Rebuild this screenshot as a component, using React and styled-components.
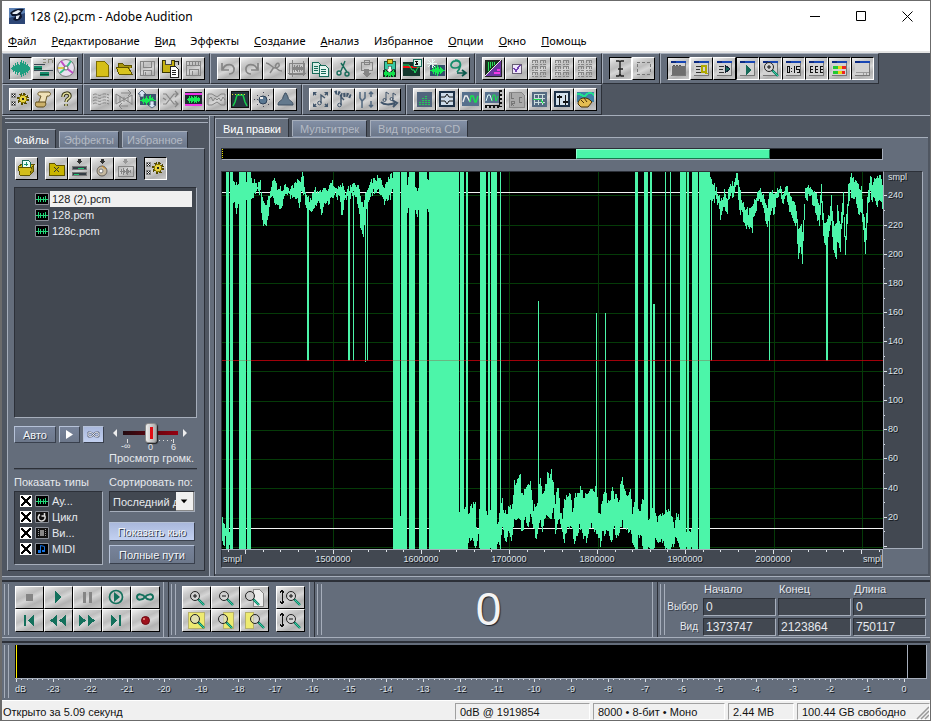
import { useState } from 'react';
import styled, { createGlobalStyle, css } from 'styled-components';

const c = {
  dark: '#4f5661',
  panel: '#646d7b',
  well: '#424851',
  light: '#a6aebb',
  shadow: '#2c3038',
  wave: '#4cf5a9',
  text: '#e6e9ee',
  dim: '#b4bac4',
};

const GlobalStyle = createGlobalStyle`
  * { box-sizing: border-box; }
  body {
    margin: 0;
    background: ${c.dark};
    font-family: "Liberation Sans", Arial, sans-serif;
    font-size: 11px;
  }
  button, input, select { font: inherit; margin: 0; padding: 0; }
  svg { display: block; }
`;

const raised = css`
  border: 1px solid;
  border-color: #fff #000 #000 #fff;
`;

const pressed = css`
  border: 1px solid;
  border-color: #000 #fff #fff #000;
`;

const sunken = css`
  border: 1px solid;
  border-color: ${c.shadow} ${c.light} ${c.light} ${c.shadow};
`;

const Window = styled.div`
  display: flex;
  flex-direction: column;
  min-height: 100vh;
  border: 1px solid #6b6b6b;
  border-left-width: 2px;
  background: ${c.dark};
`;

const TitleBar = styled.header`
  display: flex;
  align-items: center;
  height: 30px;
  padding-left: 7px;
  background: #fff;
  color: #000;
  font-family: "Noto Sans", sans-serif;

  h1 {
    flex: 1;
    margin: 0 0 0 5px;
    font-size: 12px;
    font-weight: 400;
  }
`;

const CaptionButton = styled.button`
  display: grid;
  place-items: center;
  width: 46px;
  height: 29px;
  border: 0;
  background: none;
`;

const MenuBar = styled.nav`
  display: flex;
  gap: 15px;
  height: 22px;
  padding-left: 6px;
  background: #fff;
  border-bottom: 2px solid #e4e4e4;
`;

const MenuItem = styled.button`
  border: 0;
  background: none;
  color: #000;
  font-family: "Noto Sans", sans-serif;
  font-size: 11px;
  line-height: 18px;

  &::first-letter { text-decoration: ${({ $plain }) => ($plain ? 'none' : 'underline')}; }
`;

const ToolbarRow = styled.div`
  display: flex;
  height: 31px;
`;

const ToolGroup = styled.div`
  display: flex;
  align-items: center;
  padding: 0 4px 0 6px;
  background: ${c.panel};
  border: 1px solid;
  border-color: ${c.light} ${c.shadow} ${c.shadow} ${c.light};
`;

const ToolButton = styled.button`
  display: grid;
  place-items: center;
  width: ${({ $wide }) => ($wide ? 29 : 23)}px;
  height: 23px;
  color: ${({ $off }) => ($off ? '#858585' : '#222')};
  background: linear-gradient(155deg, #f0f0f0 0%, #cfcfcf 22%, #bdbdbd 40%, #d6d6d6 55%, #b2b2b2 75%, #cacaca 100%);
  ${({ $down }) => ($down ? pressed : raised)}
`;

const Main = styled.main`
  display: flex;
  flex: 1;
  border-top: 1px solid ${c.light};
`;

const Side = styled.aside`
  display: flex;
  flex-direction: column;
  width: 207px;
  padding: 2px 4px 5px 5px;
`;

const HGrip = styled.div`
  height: 5px;
  margin: 0 -3px 6px -2px;
  border: 1px solid ${c.light};
  border-width: 1px 0;
`;

const TabRow = styled.div`
  display: flex;
  align-items: flex-end;
  gap: 3px;
`;

const Tab = styled.button`
  height: ${({ $active }) => ($active ? 20 : 17)}px;
  margin-bottom: ${({ $active }) => ($active ? -1 : 0)}px;
  padding: 0 ${({ $pad }) => $pad}px;
  color: ${({ $active }) => ($active ? '#fff' : c.dim)};
  background: ${({ $active }) => ($active ? c.panel : 'linear-gradient(#8390a6, #6c7789)')};
  border: 1px solid;
  border-color: ${c.light} ${c.shadow} transparent ${c.light};
  ${({ $active }) => $active && 'border-bottom: 0;'}
`;

const SideBody = styled.div`
  display: flex;
  flex: 1;
  flex-direction: column;
  padding: 8px 7px 5px 6px;
  background: ${c.panel};
  border: 1px solid;
  border-color: ${c.light} ${c.shadow} ${c.shadow} ${c.light};
`;

const SideTools = styled.div`
  display: flex;
  margin: 0 0 7px 1px;

  button:nth-child(1), button:nth-child(5) { margin-right: 7px; }
`;

const FileList = styled.ul`
  flex: 1;
  margin: 0;
  padding: 3px 4px 3px 20px;
  list-style: none;
  background: ${c.well};
  ${sunken}
`;

const FileRow = styled.li`
  display: flex;
  align-items: center;
  gap: 1px;
  height: 16px;
  color: ${c.text};

  span {
    flex: 1;
    padding-left: 2px;
    line-height: 16px;
    color: ${({ $selected }) => ($selected ? '#222' : c.text)};
    background: ${({ $selected }) => ($selected ? '#f0f0f0' : 'none')};
  }
`;

const PreviewRow = styled.div`
  display: flex;
  gap: 3px;
  height: 50px;
  padding-top: 8px;
`;

const FlatButton = styled.button`
  display: grid;
  place-items: center;
  width: ${({ $w }) => ($w ? `${$w}px` : '100%')};
  height: ${({ $w }) => ($w ? 17 : 19)}px;
  color: #f2f4f8;
  text-shadow: 1px 1px #333b49;
  background: ${({ $on }) => ($on ? 'linear-gradient(#a9b8dc, #c3d1f1)' : 'linear-gradient(#77839a, #6d788b)')};
  border: 1px solid;
  border-color: #b6c2d8 #39404d #39404d #b6c2d8;
`;

const Volume = styled.label`
  display: flex;
  flex-direction: column;
  width: 84px;
  margin-left: 2px;
  color: ${c.text};
  text-align: center;
  white-space: nowrap;

  input {
    height: 18px;
    margin: -2px 15px 0 14px;
    appearance: none;
    background: linear-gradient(90deg, #220b10, #960010) center / 100% 4px no-repeat;
  }
  input::-webkit-slider-thumb {
    appearance: none;
    width: 12px;
    height: 20px;
    border: 1px solid #8b8b8b;
    border-radius: 3px;
    background: linear-gradient(#e00c14, #e00c14) center / 3px 12px no-repeat, linear-gradient(90deg, #eee, #aaa);
    box-shadow: 1px 1px 1px #222;
  }
  svg { margin: -13px 0 0 4px; pointer-events: none; }
`;

const Rule = styled.hr`
  width: 100%;
  height: 2px;
  margin: 0 0 5px;
  border: 0;
  border-top: 1px solid ${c.shadow};
  background: #525a67;
`;

const Options = styled.div`
  display: grid;
  grid-template-columns: 89px 86px;
  column-gap: 6px;
  color: ${c.text};
`;

const OptionTitle = styled.div`
  height: 16px;
  line-height: 14px;
  white-space: nowrap;
`;

const TypeList = styled.div`
  height: 74px;
  padding: 1px 5px;
  background: ${c.well};
  ${sunken}
`;

const TypeRow = styled.label`
  display: flex;
  align-items: center;
  gap: 3px;
  height: 16px;
  color: ${c.text};

  input {
    width: 12px;
    height: 12px;
    appearance: none;
    border: 1px solid #fff;
    background:
      linear-gradient(45deg, transparent 43%, #000 43% 57%, transparent 57%),
      linear-gradient(-45deg, #fff 43%, #000 43% 57%, #fff 57%);
  }
  input:not(:checked) { background: #fff; }
`;

const SortColumn = styled.div`
  display: flex;
  flex-direction: column;
  gap: 4px;
`;

const SelectBox = styled.div`
  display: flex;
  height: 21px;
  margin-bottom: 6px;
  background: ${c.well};
  ${sunken}

  select {
    flex: 1;
    min-width: 0;
    padding-left: 3px;
    appearance: none;
    overflow: hidden;
    color: ${c.text};
    background: none;
    border: 0;
  }
  svg { flex: none; background: #f0f0f0; border: 1px solid #888; border-width: 0 1px 1px 0; }
`;

const Splitter = styled.div`
  flex: none;
  width: 6px;
  background: ${c.panel};
  border-left: 1px solid ${c.light};
  border-right: 1px solid ${c.shadow};
`;

const Editor = styled.section`
  display: flex;
  flex: 1;
  flex-direction: column;
  min-width: 0;
  padding: 2px 2px 2px 0;
`;

const EditorBody = styled.div`
  display: flex;
  flex: 1;
  flex-direction: column;
  gap: 11px;
  padding: 10px 5px 6px 5px;
  background: ${c.panel};
  border-top: 1px solid ${c.light};
  border-left: 1px solid ${c.light};
`;

const Overview = styled.div`
  display: flex;
  height: 12px;
  margin-right: 40px;
  background: #000;
  ${sunken}

  &::before {
    content: '';
    width: 1px;
    background: repeating-linear-gradient(#e8e000 0 1px, #000 1px 2px);
  }
`;

const OverviewRange = styled.div`
  border: 1px solid;
  border-color: #8fffd0 #17784d #17784d #8fffd0;
  background: ${c.wave};
`;

const Plot = styled.div`
  display: grid;
  flex: 1;
  grid-template-columns: 1fr 40px;
  grid-template-rows: 1fr 19px;
`;

const WaveBox = styled.div`
  position: relative;
  min-height: 200px;
  background: #000;
  border-left: 1px solid ${c.shadow};
  border-top: 1px solid ${c.shadow};

  > svg { position: absolute; inset: 0; width: 100%; height: 100%; }
`;

const Scale = styled.svg`
  width: 100%;
  height: ${({ $h }) => $h || '100%'};
  font-size: 9px;
  fill: #dfe3e9;
  shape-rendering: crispEdges;

  text { text-shadow: 1px 1px #14171c; }
`;

const RightRuler = styled.div`
  position: relative;
  background: ${c.well};
  border: 1px solid ${c.light};
  border-top-color: ${c.shadow};

  svg { position: absolute; inset: 0; }
`;

const BottomRuler = styled.div`
  height: 19px;
  background: ${c.well};
  border: 1px solid ${c.light};
  border-left-color: ${c.shadow};
`;

const Divider = styled.div`
  height: 6px;
  background: ${c.panel};
  border-top: 1px solid ${c.light};
  border-bottom: 2px solid ${c.shadow};
`;

const Dock = styled.section`
  display: flex;
  height: 55px;
  background: ${c.panel};
`;

const VGrip = styled.div`
  flex: none;
  width: 5px;
  margin: 2px 6px 2px 2px;
  border: 1px solid ${c.light};
  border-width: 0 1px;
`;

const ButtonGrid = styled.div`
  display: grid;
  grid-template-columns: repeat(${({ $cols }) => $cols}, 29px);
  align-content: start;
  padding-top: 4px;
  margin-right: ${({ $gap }) => $gap}px;
`;

const TimeDisplay = styled.output`
  flex: 1;
  padding-right: 3px;
  color: #f4f4f4;
  font-size: 46px;
  line-height: 54px;
  text-align: center;
  text-shadow: 1px 1px 1px #22262d;
`;

const RangeTable = styled.table`
  border-spacing: 2px 1px;
  margin: -2px 2px 0 -8px;
  color: ${c.text};
  text-shadow: 1px 1px #3a414c;
  table-layout: fixed;
  width: 265px;

  th {
    height: 15px;
    padding: 0 0 0 1px;
    font-weight: 400;
    text-align: left;
  }
  th:first-child { width: 36px; }
  tbody th {
    padding: 0 3px 0 0;
    font-size: 10px;
    text-align: right;
    white-space: nowrap;
  }
  td { padding: 0; }
  input {
    display: block;
    width: 100%;
    height: 18px;
    padding: 0 2px;
    color: ${c.text};
    font-size: 12px;
    background: ${c.well};
    ${sunken}
    outline: 0;
  }
`;

const LevelDock = styled.section`
  display: flex;
  height: 57px;
  padding-right: 3px;
  background: ${c.panel};
`;

const LevelColumn = styled.div`
  flex: 1;
  padding-top: 2px;
`;

const LevelMeter = styled.div`
  display: flex;
  justify-content: space-between;
  height: 34px;
  padding: 0 18px 0 1px;
  background: #000;
  border-bottom: 1px solid ${c.light};
  border-right: 1px solid ${c.light};

  i { width: 1px; background: ${c.light}; }
  i:first-child { background: #ffee00; }
`;

const StatusBar = styled.footer`
  display: flex;
  gap: 3px;
  height: 20px;
  padding-top: 2px;
  background: #f0f0f0;
  border-top: 1px solid #fff;
`;

const StatusCell = styled.div`
  width: ${({ $w }) => $w}px;
  padding-left: 4px;
  color: #111;
  line-height: 16px;
  border: 1px solid;
  border-color: #a0a0a0 #fff #fff #a0a0a0;
  ${({ $w }) => !$w && 'flex: 1; padding-left: 1px; border-color: transparent; border-left: 0;'}
  &:last-child { display: flex; justify-content: space-between; }
`;

const Glyph = ({ children, size = 21, height, crisp }) => (
  <svg
    width={size}
    height={height || size}
    viewBox={`0 0 ${size} ${height || size}`}
    fill="none"
    stroke="currentColor"
    shapeRendering={crisp ? 'crispEdges' : 'auto'}
    aria-hidden="true"
  >
    {children}
  </svg>
);

const lens = (x, y, sign = '+') => (
  <g shapeRendering="auto">
    <path d={`M${x + 3} ${y + 3}l6 6`} stroke="#0a7d62" strokeWidth="2.400" />
    <path d={`M${x + 4} ${y + 4}l5 5`} stroke="#37cfa4" />
    <circle cx={x} cy={y} r="4.500" stroke="#222" fill="#d8d8d8" fillOpacity=".6" />
    {sign && <path d={`M${x - 2} ${y}h4`} stroke="#111" />}
    {sign === '+' && <path d={`M${x} ${y - 2}v4`} stroke="#111" />}
  </g>
);

// vertical bars around a middle line
const bars = (x, mid, heights, stroke, step = 1) => (
  <path d={heights.map((h, i) => `M${x + i * step + 0.5} ${mid - h}v${h * 2 + 1}`).join('')} stroke={stroke} />
);

const winIcon = (inner) => (
  <>
    <path d="M3 3h15v15H3z" fill="#d2d2d2" stroke="none" />
    <path d="M17.500 5v13M3 17.500h15" stroke="#777" />
    <path d="M3 4h15" stroke="#1746b4" strokeWidth="2" />
    <path d="M3 4h5" stroke="#0c2a80" strokeWidth="2" />
    {inner}
  </>
);

const cell = (x, y) => `M${x} ${y + 0.5}h6M${x + 0.5} ${y}v3M${x + 3.5} ${y}v3M${x} ${y + 4.5}h2m1 0h3M${x + 5.5} ${y + 1}v2`;

const icons = {
  edit: bars(1, 10, [0, 1, 3, 2, 5, 3, 6, 4, 3, 6, 8, 5, 7, 4, 6, 3, 4, 2, 1], '#1f9e80'),
  multi: <><path d="M1 6.500h11M1 12.500h19" stroke="#3d4653" /><path d="M1 8h8v4H1zM7 14h9v4H7z" fill="#168c6b" stroke="none" /><path d="M1 10.500h8m-2 6h9" stroke="#0b4e3d" /><path d="M10 1.500h3m-3 3h3m2-3h4m-4 0v3m4-3v3" stroke="#8b8b7a" /></>,
  cd: <g shapeRendering="auto"><circle cx="10" cy="10" r="8.500" fill="#e8e0ee" stroke="#777" /><path d="M10 10L5 3M10 10l7 5" stroke="#c04fc4" strokeWidth="2" /><path d="M10 10l5-7M10 10l-6 5" stroke="#37bf87" strokeWidth="2" /><path d="M10 10H2" stroke="#d8ca49" strokeWidth="2" /><circle cx="10" cy="10" r="2" fill="#fff" stroke="#666" /></g>,
  page: <path d="M5 3h8l4 4v11H5z" fill="#d6bf17" stroke="#7b6b00" />,
  folder: <><path d="M4 15V5h4l2 2h7v3" fill="#a8960f" stroke="#5e5300" /><path d="M2 9h12l4 7H5z" fill="#d8c41e" stroke="#5e5300" /></>,
  disk: <path d="M3 3h14v14H3zM6 3v6h8V3M6 17v-5h8v5M8 14v3" />,
  saveAs: <><path d="M2 2h12v12H2z" fill="#c5b113" stroke="#3b3700" /><path d="M5 2v4h6V2" fill="#ddd" stroke="#444" /><path d="M10 8h5l3 3v8h-8z" fill="#fff" stroke="#222" /><path d="M12 12h4m-4 2h4m-4 2h4M14 3h4v4" stroke="#222" /></>,
  saveAll: <><path d="M3 3h14v14H3zM3 7h14M6 4v3m3-3v3m3-3v3m3-3v3M6 17v-6h9v6M9 13v4" /></>,
  undo: <path d="M4 5v7h7M5 11c2-6 12-6 11 1 0 3-3 4-5 4" strokeWidth="1.700" shapeRendering="auto" />,
  redo: <path d="M17 5v7h-7M16 11C14 5 4 5 5 12c0 3 3 4 5 4" strokeWidth="1.700" shapeRendering="auto" />,
  repeat: <path d="M2 5c4 0 6 5 9 5s5-2 4-4-5 1-3 4c2 2 4 3 6 3M10 9l-4 6" strokeWidth="1.500" shapeRendering="auto" />,
  trim: <><path d="M2 5h15v11H2zM5 2v17M1 15h18M16 3v15" />{bars(6, 10, [1, 3, 1, 2, 3, 1, 3, 1, 2, 1], '#858585')}</>,
  copy: <><path d="M2 4h6l3 3v8H2z" fill="#d7ece5" stroke="#176b59" /><path d="M9 7h6l3 3v8H9z" fill="#e5f5f0" stroke="#176b59" /><path d="M4 8h4m-4 2h4m-4 2h4m3-1h5m-5 2h5m-5 2h5" stroke="#176b59" /></>,
  cut: <path d="M12 3L8 13M8 5l6 9M4 15a2 2 0 104 0 2 2 0 10-4 0M12 16a2 2 0 104 0 2 2 0 10-4 0" stroke="#176b59" strokeWidth="1.400" shapeRendering="auto" />,
  paste: <><path d="M5 4h11v8H5zM8 2h5v4H8z" /><path d="M8 11h5v4h3l-5 4-5-4h2z" fill="#858585" stroke="none" /></>,
  mixPaste: <><path d="M5 3h11v8H5z" fill="#38c9a2" stroke="#155645" /><path d="M8 1h5v4H8z" fill="#e4c629" stroke="#6b5700" /><path d="M4 12h13v7H4z" fill="#142a20" stroke="none" />{bars(5, 15, [1, 3, 2, 1, 3, 2, 3, 1, 2, 3, 1], '#12e04b')}<path d="M9 8h3v3h2l-3.500 4L7 11h2z" fill="#fff" stroke="#333" strokeWidth=".5" /></>,
  zero: <><path d="M1 4h17v14H1z" fill="#15382e" stroke="none" /><path d="M1 9h16" stroke="#f01010" strokeWidth="2" /><path d="M1 7h6l3 5h2l1 3 3-6h2" stroke="#20e060" shapeRendering="auto" /><path d="M11 1h8v7h-8z" fill="#ddf2e8" stroke="#176b59" /><path d="M13 3h3l-2 2 2 1h-3" stroke="#111" /></>,
  insert: <><path d="M5 7h15v11H5z" fill="#33506c" stroke="none" />{bars(5, 12, [0, 0, 1, 3, 1, 4, 2, 5, 3, 1, 3, 2, 1, 0, 0], '#15ec53')}<path d="M7 1v9M2 5h10M3 2l7 7m0-7L3 9" stroke="#e9f8f5" /></>,
  convert: <g shapeRendering="auto"><path d="M7 2c7 0 7 8 0 8s-4-8 2-7c6 1 3 8 0 11" stroke="#168c6b" strokeWidth="1.700" /><path d="M9 15h9m-4-3l4 3-4 3" stroke="#0a594c" strokeWidth="1.700" /></g>,
  spectral: <><path d="M2 2h16v16H2z" fill="#6c35a0" stroke="#222" /><path d="M3 3h14L3 17z" fill="#14391d" stroke="none" /><path d="M5 4v9M7 4v6m2-6v4m2-4v3" stroke="#2ae05b" /><path d="M2 18L18 2" stroke="#eee" /><path d="M11 15h6m-3-3h3" stroke="#f53be5" strokeWidth="2" /></>,
  check: <><path d="M6 6h9v9H6z" fill="#eee5fa" stroke="#655c72" /><path d="M8 10l2 3 4-6" stroke="#7240b0" strokeWidth="1.700" /></>,
  blocks: <path d={[[3, 2], [11, 2], [3, 8], [11, 8], [3, 14], [11, 14]].map(([x, y]) => cell(x, y)).join('')} />,
  ibeam: <path d="M6 3h3l1 1v12l-1 2H6M14 3h-3l-1 1v12l1 2h3M8 11h5" stroke="#222" strokeWidth="1.400" shapeRendering="auto" />,
  marquee: <path d="M4 4h13v12H4z" stroke="#777" strokeDasharray="3 2" />,
  wOrg: winIcon(<><path d="M4 8h13v9H4z" fill="#6e6e6e" stroke="none" /><path d="M5 7.500h2m1 0h2m1 0h2" stroke="#555" /></>),
  wCue: winIcon(<><path d="M5 8h5m-5 3h4m-4 3h5" stroke="#333" /><path d="M11 8h4v6h-4zM14 13l2 3" stroke="#b0a800" strokeWidth="2" /></>),
  wList: winIcon(<><path d="M5 8h5m-5 3h4m-4 3h5" stroke="#333" /><path d="M11 7l5 4-5 4z" fill="#176b59" stroke="#123" /></>),
  wPlay: winIcon(<path d="M9 7l5 5-5 5z" fill="#176b59" stroke="none" />),
  wZoom: winIcon(lens(9, 9)),
  wTime: winIcon(<path d="M4.500 8.500h2v6h-2zM8.500 10v1m0 2v1M11.500 8v7M16.500 8.500h-3v3h3v3h-3" stroke="#111" />),
  wSel: winIcon(<path d="M7 8.500H4.500v6H7M4.500 11.500H7M12 8.500H9.500v6H12M9.500 11.500H12M17 8.500h-2.500v6H17M14.500 11.500H17" stroke="#111" strokeWidth="1.500" />),
  wLevel: winIcon(<><path d="M4 9h5m-5 5h5" stroke="#21c931" strokeWidth="3" /><path d="M9 9h4m-4 5h4" stroke="#e5d714" strokeWidth="3" /><path d="M13 9h4m-4 5h3" stroke="#ee2520" strokeWidth="3" /></>),
  wStatus: winIcon(<path d="M4 14.500h13M11 15v2m3-2v2" stroke="#999" />),
  gear: <><path d="M1.500 4.500h4v4h-4zM1.500 12.500h4v4h-4z" fill="#eee" stroke="#888" /><path d="M2 5l3 3m0-3L2 8m0 5l3 3m0-3l-3 3" stroke="#222" /><circle cx="13" cy="10" r="4.500" stroke="#534900" strokeWidth="3" strokeDasharray="2 1.500" /><circle cx="13" cy="10" r="3.500" fill="#e8d33f" stroke="#8a7900" /><path d="M12 9h2v2h-2z" fill="#222" stroke="none" /></>,
  script: <g shapeRendering="auto"><path d="M7 3h9c3 1 1 5-2 4l-2 8H5l3-8c-4 0-4-4-1-4z" fill="#f0e2b8" stroke="#6b5827" /><path d="M3 13h9c2 2 0 5-2 5H5c-3 0-3-3-2-5z" fill="#ccb16b" stroke="#594718" /></g>,
  help: <g shapeRendering="auto"><path d="M7 8c0-5 7-5 7-1 0 3-4 2-4 6m0 2v2" stroke="#37371a" strokeWidth="3.500" /><path d="M7 8c0-5 7-5 7-1 0 3-4 2-4 6m0 2v2" stroke="#e8e2a0" strokeWidth="1.500" /></g>,
  lines: <path d="M2 6c4-3 5 2 8 0s5-1 8 0M2 9c4-3 5 2 8 0s5-1 8 0M2 12c4-3 5 2 8 0s5-1 8 0M2 15c4-3 5 2 8 0s5-1 8 0" strokeDasharray="4 1" shapeRendering="auto" />,
  flip: <path d="M7 4h10m-3-3l3 3-3 3M14 17H5m3-3l-3 3 3 3M2 5l16 10M2 15L18 6M2 5v10m4-8v7m4-6v5m4-5v5m4-7v10" shapeRendering="auto" />,
  norm: <><path d="M3 5h16v11H3z" fill="#3d536e" stroke="none" />{bars(3, 11, [0, 0, 1, 3, 1, 2, 4, 2, 1, 4, 5, 2, 3, 1, 0, 0], '#15ec53')}<path d="M5 1l4 4H7v3H3V5H1zM15 19l-4-3h2v-4h4v4h2z" fill="#d7e3f4" stroke="#30445b" strokeWidth=".7" shapeRendering="auto" /></>,
  cross: <path d="M3 5h3l8 10h4M3 15h3l8-10h4M15 2l3 3-3 3M15 12l3 3-3 3M3 9l3 2" strokeWidth="1.200" shapeRendering="auto" />,
  dyn: <><path d="M2 3h17v14H2z" fill="#1d2d31" stroke="none" /><path d="M2 5h17M2 16h17" stroke="#ec35e6" strokeWidth="2" />{bars(4, 10, [0, 1, 3, 1, 3, 2, 1, 3, 2, 3, 1, 2, 1], '#15ec53')}</>,
  envelope: <><path d="M2 5l4 0 5 3 4-3h4M2 16l4 0 5-3 4 3h4M2 5v11M19 5v11" shapeRendering="auto" /><path d="M3 10l2-2 2 4 2-3 2 2 2-2 2 3 2-4 2 3" shapeRendering="auto" /></>,
  filter: <><path d="M2 2h17v16H2z" fill="#26343e" stroke="#111" /><path d="M4 17l2-4 2-7h6l2 7 2 4" stroke="#15d34d" strokeWidth="1.500" shapeRendering="auto" /><path d="M3 5h15" stroke="#dce52a" strokeDasharray="1 2" /></>,
  noise: <><circle cx="11" cy="11" r="4" fill="#597792" stroke="#2c4057" shapeRendering="auto" /><path d="M8 8h3v2H8z" fill="#eee" stroke="none" /><path d="M2 10h1m2 0h1m11 0h1M5 6h1m10 0h1M5 15h1m10 0h1M11 3v1m0 13v1" stroke="#445" /></>,
  stretch: <path d="M10 4h1l2 4c0 4 5 3 5 8H3c0-5 5-4 5-8z" fill="#63798d" stroke="#3f5163" shapeRendering="auto" />,
  pitch: <g shapeRendering="auto"><path d="M3 3h4L3 7zM18 3h-4l4 4zM3 18h4l-4-4zM18 18h-4l4-4z" fill="#41556b" stroke="none" /><path d="M4 4l2 2m11-2l-2 2M4 17l2-2m11 2l-2-2M11 14V6l4 3" stroke="#41556b" strokeWidth="1.300" /><circle cx="9.500" cy="14" r="1.800" stroke="#41556b" /></g>,
  notes: <g shapeRendering="auto"><path d="M2 4c4-2 5 3 9 2s4 1 8 2" stroke="#41556b" strokeWidth="4" strokeDasharray="2 1" /><path d="M8 16V8l3 3" stroke="#41556b" strokeWidth="1.400" /><circle cx="6.500" cy="16" r="1.800" stroke="#41556b" /></g>,
  tuning: <path d="M4 3v6l2 3 3-3V3M6 12v7M15 8V3m-2 2l2-2 2 2M15 12v6m-2-2l2 2 2-2" stroke="#52687f" strokeWidth="1.500" shapeRendering="auto" />,
  rotate: <g shapeRendering="auto"><path d="M2 13c3 3 9 3 14 1m-3-3l5 3-4 4" stroke="#41556b" strokeWidth="2" /><path d="M7 11V3l3 2M14 10V4l3 2" stroke="#41556b" /><circle cx="5.500" cy="11" r="1.500" stroke="#41556b" /><circle cx="12.500" cy="10" r="1.500" stroke="#41556b" /></g>,
  freq: <><path d="M3 3h15v15H3z" fill="#50647d" stroke="none" /><path d="M6 16v-4m3 4V9m3 7V6m3 10v-6" stroke="#22cc56" strokeDasharray="1 1" strokeWidth="2" /></>,
  phase: <><path d="M3 3h14v14H3z" fill="#cddbe8" stroke="#1d3147" strokeWidth="2" /><path d="M4 8h4l2-3 2 3h4M4 12h4l2 3 2-3h4" stroke="#111" shapeRendering="auto" /></>,
  stats: <><path d="M2 3h17v14H2z" fill="#56708d" stroke="none" /><path d="M3 13l2-6 2 0 3 6" stroke="#eee" strokeWidth="1.400" shapeRendering="auto" /><path d="M10 13l1-6h2l2 6h1l2-6" stroke="#18e34d" strokeWidth="1.500" shapeRendering="auto" /></>,
  statsAxis: <><path d="M2 3h14v11H2z" fill="#56708d" stroke="none" /><path d="M3 12l2-6 2 0 2 6" stroke="#dff" shapeRendering="auto" /><path d="M9 12l1-6h2l1 6 2-5" stroke="#18e34d" shapeRendering="auto" /><path d="M17.500 1v17M2 17.500h16" stroke="#111" strokeWidth="3" strokeDasharray="2 2" /><path d="M16.500 1v16M2 16.500h15" stroke="#111" /></>,
  lrc: <><path d="M3 3h12l3 3v12H3z" fill="#aaa" stroke="#888" /><path d="M5 4v5h3M5 17v-5h3v2H5l3 3M16 8h-3v5h3" stroke="#777" /></>,
  grid: <><path d="M3 3h15v15H3z" fill="#536a81" stroke="none" /><path d="M5.500 5v11m4-11v11m4-11v11M5 5.500h11M5 9.500h11M5 13.500h11" stroke="#cdd" /><path d="M4 10h7l4 5" stroke="#1dd64e" /></>,
  mixer: <><path d="M3 3h14v14H3z" fill="#d3e1ec" stroke="#1d3147" strokeWidth="2" /><path d="M7.500 6v10m6-10v10M5 8h5m1 5h5" stroke="#111" strokeWidth="1.600" /></>,
  surf: <><path d="M2 3h17v10H2z" fill="#3f81a6" stroke="none" /><path d="M2 6c4-4 5 4 9 0s5-2 8 0" stroke="#20df8f" strokeWidth="2" /><g shapeRendering="auto"><path d="M3 15c0-6 7-8 12-4l2 2-4 5H6z" fill="#e5bd51" stroke="#4b3104" /><path d="M6 11l3 3M9 9l3 4" stroke="#4b3104" /></g></>,
  open: <><path d="M2 9l4-3h11v3M2 9h14l-2 8H4z" fill="#d2bd1b" stroke="#5e5300" /><path d="M16 9l2-2-1 7-3 3" fill="#a18f10" stroke="#5e5300" /><path d="M6 9V2h6l2 2v5" fill="#e8fff8" stroke="#176b59" /><path d="M10 4v4M8 6h4" stroke="#168c6b" /></>,
  closeFolder: <><path d="M3 5h5l2 2h8v10H3z" fill="#c8b400" stroke="#5e5300" /><path d="M8 9l5 5m0-5l-5 5" stroke="#333" /></>,
  toTracks: <><path d="M9 1h3v2h2l-3.500 3L7 3h2z" fill="#333" stroke="none" /><path d="M3 8h14v3H3zm0 6h14v3H3z" fill="#333c44" stroke="#777" /><path d="M9 10h6M5 16h5" stroke="#20c774" /></>,
  toCd: <><path d="M9 1h3v2h2l-3.500 3L7 3h2z" fill="#333" stroke="none" /><g shapeRendering="auto"><circle cx="10" cy="13" r="5" fill="#c6b9a0" stroke="#66615b" /><circle cx="9" cy="13" r="2" fill="#fff" stroke="#777" /><path d="M10 8l4 3" stroke="#c98820" /></g></>,
  toWave: <><path d="M9 1h3v2h2l-3.500 3L7 3h2z" fill="#999" stroke="none" /><path d="M3 8h15v10H3z" />{bars(5, 13, [0, 2, 0, 3, 1, 0, 2, 3, 1, 0, 1], '#858585')}</>,
  stop: <path d="M7 7h7v7H7z" fill="#858585" stroke="none" />,
  play: <path d="M7 4l7 6-7 6z" fill="#13705c" stroke="none" />,
  pause: <path d="M6 5h3v11H6zm6 0h3v11h-3z" fill="#858585" stroke="none" />,
  playEnd: <g shapeRendering="auto"><circle cx="10" cy="10" r="6.500" stroke="#13705c" strokeWidth="1.700" /><path d="M8 5l6 5-6 5z" fill="#13705c" stroke="none" /></g>,
  loop: <path d="M10 10C8 7 2 6 2 10s6 3 8 0 8-4 8 0-6 3-8 0" stroke="#13705c" strokeWidth="2" shapeRendering="auto" />,
  start: <path d="M5 5h2v11H5zM15 5v11l-6-5.500z" fill="#13705c" stroke="none" />,
  rewind: <path d="M9 5v11l-7-5.500zM18 5v11l-7-5.500z" fill="#13705c" stroke="none" />,
  forward: <path d="M2 5v11l7-5.500zM11 5v11l7-5.500z" fill="#13705c" stroke="none" />,
  end: <path d="M5 5v11l6-5.500zM13 5h2v11h-2z" fill="#13705c" stroke="none" />,
  record: <g shapeRendering="auto"><circle cx="10.500" cy="10.500" r="4" fill="#9f111c" stroke="#6f0711" /><circle cx="9" cy="9" r="1" fill="#e98" stroke="none" /></g>,
  zoomIn: lens(9, 9),
  zoomOut: lens(9, 9, '-'),
  zoomFull: <><path d="M9 2h6l4 4v13H9z" fill="#eee" stroke="#888" />{lens(6, 9, '')}</>,
  zoomSel: <><path d="M2 2h16v16H2z" fill="#eeeb70" stroke="#b8b26a" />{lens(9, 9, '')}</>,
  zoomLeft: <><path d="M8 2h10v16H8z" fill="#eeeb70" stroke="#b8b26a" />{lens(8, 9, '')}</>,
  zoomRight: <><path d="M1 2h8v16H1z" fill="#eeeb70" stroke="#b8b26a" />{lens(11, 9, '')}</>,
  vIn: <><path d="M2 3v14M0 6l2-3 2 3M0 14l2 3 2-3" stroke="#111" />{lens(11, 9)}</>,
  vOut: <><path d="M2 3v14M0 6l2-3 2 3M0 14l2 3 2-3" stroke="#111" />{lens(11, 9, '-')}</>,
};

const Tool = ({ name, ...rest }) => (
  <ToolButton type="button" aria-label={name} {...rest}>
    <Glyph crisp>{icons[name]}</Glyph>
  </ToolButton>
);

// "!" marks a disabled tool, "_" one that is pressed in
const parseTool = (key) => ({
  name: key.replace(/[!_]/g, ''),
  $off: key.includes('!'),
  $down: key.includes('_'),
});

const toolbars = [
  [
    ['_edit', 'multi', 'cd'],
    ['page', 'folder', '!disk', 'saveAs', '!saveAll'],
    ['!undo', '!redo', '!repeat', '!trim', 'copy', 'cut', '!paste', 'mixPaste', 'zero', 'insert', 'convert'],
    ['spectral', 'check', '!blocks', '!blocks', '!blocks'],
    ['_ibeam', '!marquee'],
    ['_wOrg', 'wCue', 'wList', '_wPlay', '_wZoom', '_wTime', '_wSel', '_wLevel', '_wStatus'],
  ],
  [
    ['gear', 'script', 'help'],
    ['!lines', '!flip', 'norm', '!cross', 'dyn', '!envelope', 'filter', 'noise', 'stretch'],
    ['pitch', 'notes', 'tuning', 'rotate'],
    ['freq', 'phase', 'stats', 'statsAxis', '!lrc', 'grid', 'mixer', 'surf'],
  ],
];

const menu = ['Файл', 'Редактирование', 'Вид', 'Эффекты', 'Создание', 'Анализ', 'Избранное', 'Опции', 'Окно', 'Помощь'];
const noMnemonic = ['Эффекты', 'Избранное'];

const files = ['128 (2).pcm', '128.pcm', '128c.pcm'];

const miniWave = (
  <Glyph size={14} height={12}>
    <path d="M.5.5h13v11H.5z" fill="#000" stroke="#8a8f98" />
    <path d="M1 6.500h12M3.500 3v6M5.500 4v5M8.500 4v5M10.500 3v6" stroke="#22d878" />
  </Glyph>
);

const types = [
  ['Ау...', miniWave],
  ['Цикл', <Glyph key="l" size={14} height={12}><path d="M.5.5h13v11H.5z" fill="#111" stroke="#8a8f98" /><path d="M5 3.500a3.500 3.500 0 104.500 1M9.500 2v3h-3" stroke="#ddd" strokeWidth="1.500" /></Glyph>],
  ['Ви...', <Glyph key="v" size={14} height={12}><path d="M.5.5h13v11H.5z" fill="#111" stroke="#8a8f98" /><path d="M3.500 2v8m7-8v8" stroke="#999" strokeDasharray="1 1" /><path d="M5 3h4v6H5z" fill="#888" stroke="none" /></Glyph>],
  ['MIDI', <Glyph key="m" size={14} height={12}><path d="M.5.5h13v11H.5z" fill="#000" stroke="#8a8f98" /><path d="M5.500 9V2.500l4 1v5" stroke="#1673e0" /><path d="M3 7h3v3H3zm4 0h3v2H7z" fill="#1673e0" stroke="none" /></Glyph>],
];

// wave drawing, 661 x 377 units
const W = 661;
const H = 377;

const columns = [
  [4, 3], [8, 3], [17, 7], [25, 4], [171, 7], [179, 6], [187, 6], [197, 8], [207, 30], [238, 4], [244, 2],
  [258, 6], [266, 2], [269, 6], [278, 1], [413, 3], [422, 4], [428, 2], [443, 1], [448, 1],
  [458, 6], [465, 2], [470, 6], [477, 11],
];

// x, y1, y2, width
const spikes = [
  [85, 28, 189, 2], [126, 20, 189, 2], [131, 20, 189, 1], [143, 30, 190, 1], [145, 25, 189, 1],
  [489, 20, 189, 1], [547, 20, 189, 1], [604, 50, 189, 2],
  [316, 129, 350, 1], [374, 141, 350, 1], [383, 141, 350, 1], [431, 132, 376, 2],
];

// x, top, bottom triples
const envelopes = [
  [11, 12, 28, 14, 11, 40, 17, 11, 26, 29, 7, 28, 31, 9, 23, 35, 12, 20, 38, 8, 20, 39, 21, 43, 41, 30, 54, 44, 30, 53, 46, 24, 43, 48, 18, 28, 51, 6, 23, 53, 12, 34, 57, 17, 36, 59, 16, 33, 62, 16, 26, 65, 13, 23, 68, 18, 24, 72, 14, 22, 75, 9, 28, 77, 12, 34, 80, 2, 17, 83, 17, 30, 86, 26, 38, 88, 28, 40, 92, 16, 37, 95, 18, 28, 100, 18, 43, 102, 15, 31, 106, 18, 33, 109, 10, 25, 112, 12, 22, 117, 18, 27, 120, 13, 46, 122, 20, 28, 125, 18, 25, 132, 13, 22, 134, 12, 28, 137, 18, 45, 138, 26, 53, 141, 32, 63, 143, 22, 42, 145, 18, 33, 148, 8, 22, 152, 7, 19, 157, 3, 20, 160, 10, 25, 162, 15, 33, 165, 7, 27, 168, 3, 25, 171, 8, 18],
  [185, 12, 38, 187, 2, 38, 193, 12, 38, 195, 18, 43, 198, 10, 36, 205, 5, 40, 208, 5, 40],
  [488, 2, 26, 490, 9, 31, 493, 16, 26, 496, 21, 33, 498, 29, 48, 501, 28, 38, 502, 20, 34, 505, 26, 43, 506, 16, 25, 508, 11, 23, 511, 13, 25, 513, 6, 18, 515, 2, 14, 517, 18, 41, 520, 29, 41, 522, 33, 54, 524, 36, 58, 526, 41, 53, 528, 34, 56, 530, 36, 58, 531, 29, 44, 534, 24, 36, 535, 19, 31, 538, 14, 29, 540, 21, 31, 542, 29, 44, 545, 33, 53, 548, 21, 41, 550, 18, 38, 552, 23, 44, 554, 18, 26, 558, 16, 23, 561, 23, 33, 564, 14, 24, 567, 24, 38, 570, 29, 48, 572, 28, 49, 574, 38, 54, 576, 54, 86, 578, 51, 78, 580, 58, 89, 582, 34, 48, 583, 14, 28, 588, 14, 23, 592, 19, 36, 594, 21, 46, 597, 31, 51, 599, 14, 33, 601, 44, 64, 603, 54, 74, 605, 48, 74, 607, 44, 58, 609, 23, 48, 611, 49, 76, 614, 54, 88, 615, 36, 68, 618, 54, 83, 619, 38, 58, 621, 23, 41, 623, 61, 86, 624, 44, 71, 626, 14, 34, 628, 3, 21, 630, 4, 29, 632, 8, 26, 634, 6, 29, 637, 19, 44, 639, 14, 38, 641, 41, 61, 643, 54, 83, 644, 38, 68, 646, 18, 34, 648, 4, 21, 650, 13, 33, 652, 3, 24, 655, 6, 34, 658, 6, 29, 661, 18, 39],
  [0, 347, 371, 2, 351, 371, 3, 358, 366, 4, 358, 368, 8, 358, 376],
  [178, 345, 377, 180, 345, 377],
  [237, 342, 377, 242, 335, 377, 244, 333, 377, 246, 345, 371, 248, 331, 368, 250, 333, 363, 253, 333, 377, 254, 358, 375, 256, 358, 365, 257, 338, 377, 258, 335, 377, 264, 341, 377, 268, 338, 377, 275, 351, 371, 278, 338, 377, 280, 328, 355, 282, 341, 365, 284, 341, 368, 286, 336, 360, 289, 335, 368, 290, 331, 361, 292, 311, 348, 295, 308, 345, 298, 305, 348, 299, 321, 360, 301, 325, 358, 303, 315, 345, 306, 310, 356, 308, 310, 345, 310, 331, 351, 311, 338, 358, 314, 331, 365, 316, 325, 355, 318, 306, 348, 320, 321, 360, 323, 315, 345, 325, 303, 346, 327, 305, 345, 329, 300, 345, 331, 311, 338, 333, 333, 361, 335, 313, 355, 336, 313, 350, 338, 338, 351, 340, 348, 360, 342, 325, 368, 345, 325, 358, 348, 320, 355, 350, 342, 360, 352, 325, 370, 355, 321, 365, 357, 318, 355, 359, 316, 356, 361, 326, 365, 364, 323, 368, 366, 318, 360, 369, 315, 351, 371, 318, 358, 374, 315, 360, 376, 338, 365, 378, 341, 373, 380, 330, 361, 383, 315, 361, 385, 333, 356, 388, 325, 370, 390, 316, 365, 392, 325, 355, 394, 321, 365, 397, 331, 361, 398, 315, 355, 400, 305, 351, 402, 315, 356, 405, 325, 355, 406, 320, 360, 408, 316, 355, 410, 343, 368, 412, 331, 375, 413, 335, 377, 416, 340, 365, 419, 335, 365, 421, 326, 377, 425, 348, 377, 428, 341, 377, 431, 331, 377, 433, 338, 365, 435, 351, 371, 438, 340, 370, 441, 345, 368, 443, 341, 377, 446, 340, 377, 450, 345, 375, 452, 356, 370, 454, 341, 366, 456, 343, 373, 458, 358, 377],
  [464, 358, 377, 470, 358, 377],
];

const buildWave = () => {
  let seed = 7;
  const rnd = () => {
    seed = (seed * 16807) % 2147483647;
    return seed / 2147483647 - 0.5;
  };
  let d = columns.map(([x, w]) => `M${x} 0h${w}V${H}h-${w}z`).join('');
  d += spikes.map(([x, a, b, w]) => `M${x} ${a}h${w}V${b}h-${w}z`).join('');
  envelopes.forEach((e) => {
    for (let i = 0; i + 5 < e.length; i += 3) {
      const [x0, t0, b0, x1, t1, b1] = e.slice(i, i + 6);
      for (let x = x0; x < x1; x++) {
        const k = (x - x0) / (x1 - x0);
        const t = Math.max(0, Math.round(t0 + (t1 - t0) * k + rnd() * 7));
        const b = Math.min(H, Math.round(b0 + (b1 - b0) * k + rnd() * 7));
        d += `M${x} ${t}h1V${b}h-1z`;
      }
    }
  });
  return d;
};

const wavePath = buildWave();

const levels = [240, 220, 200, 180, 160, 140, 120, 100, 80, 60, 40, 20, 0];
const levelY = (v) => 376 - v * 1.465;
const samples = [1400000, 1500000, 1600000, 1700000, 1800000, 1900000, 2000000, 2100000];
const sampleX = (v) => ((v - 1373747) / 750117) * W;

const Waveform = () => (
  <svg viewBox={`0 0 ${W} ${H}`} preserveAspectRatio="none" shapeRendering="crispEdges">
    {levels.map((v) => <rect key={v} y={Math.round(levelY(v)) - 1} width={W} height="1" fill="#053b08" />)}
    {samples.map((v) => <rect key={v} x={Math.round(sampleX(v))} width="1" height={H} fill="#053b08" />)}
    <rect y="20" width={W} height="1" fill="#f2f2f2" />
    <rect y="356" width={W} height="1" fill="#f2f2f2" />
    <path d={wavePath} fill={c.wave} />
    <rect y="188" width={W} height="1" fill="#c8000c" fillOpacity=".8" />
    {columns.map(([x, w]) => <rect key={x} x={x} y="188" width={w} height="1" fill="#69b782" />)}
  </svg>
);

const percent = (n, of) => `${(n / of) * 100}%`;

const LevelRuler = () => (
  <Scale>
    <text x="4" y="8">smpl</text>
    {levels.map((v) => (
      <g key={v}>
        <rect y={percent(levelY(v) - 1, H)} width="3" height="1" />
        {v > 0 && <rect y={percent(levelY(v - 10) - 1, H)} width="1" height="1" />}
        {v > 0 && <svg y={percent(levelY(v) - 1, H)} overflow="visible"><text x="4" y="3">{v}</text></svg>}
      </g>
    ))}
  </Scale>
);

const SampleRuler = () => (
  <Scale>
    <text x="1" y="12">smpl</text>
    <text x="100%" y="12" textAnchor="end">smpl</text>
    {samples.map((v, i) => (
      <g key={v}>
        <rect x={percent(sampleX(v), W)} width="1" height="4" />
        {[-20000, 20000, 40000, 60000].map((s) => <rect key={s} x={percent(sampleX(v + s), W)} width="1" height="2" />)}
        {i > 0 && i < 7 && <text x={percent(sampleX(v), W)} y="12" textAnchor="middle">{v}</text>}
      </g>
    ))}
  </Scale>
);

const dbX = (i) => percent(1 + i * 37, 912);

const DbScale = () => (
  <Scale $h="20px">
    {Array.from({ length: 25 }, (_, i) => (
      <g key={i}>
        <rect x={dbX(i)} width="1" height="3" />
        {i < 24 && [1, 2, 3, 4, 5, 6].map((m) => <rect key={m} x={dbX(i + m / 7)} width="1" height="1" />)}
        {i > 0 && <text x={dbX(i)} y="13" textAnchor="middle">{i - 24}</text>}
      </g>
    ))}
    <text x="0" y="13">dB</text>
  </Scale>
);

const sideTabs = ['Файлы', 'Эффекты', 'Избранное'];
const viewTabs = ['Вид правки', 'Мультитрек', 'Вид проекта CD'];

export default function App() {
  const [sideTab, setSideTab] = useState(0);
  const [viewTab, setViewTab] = useState(0);
  const [selected, setSelected] = useState(0);

  return (
    <>
      <GlobalStyle />
      <Window>
        <TitleBar>
          <svg width="16" height="16" viewBox="0 0 16 16">
            <path d="M0 0h16v16H0z" fill="#5d82b5" />
            <path d="M0 10l16-5v11H0z" fill="#2d4675" />
            <path d="M1 5c3-4 9-5 14-4l-3 4 1 4c-2 4-7 5-9 2l3-3H3z" fill="#0c142a" />
            <path d="M3 5l6-3 3 1-4 3H4zM7 8l4-1-2 4H7z" fill="#e5ecf5" />
          </svg>
          <h1>128 (2).pcm - Adobe Audition</h1>
          <CaptionButton aria-label="Minimize"><Glyph size={11}><path d="M0 5.500h10" /></Glyph></CaptionButton>
          <CaptionButton aria-label="Maximize"><Glyph size={11}><path d="M.5.5h9v9h-9z" /></Glyph></CaptionButton>
          <CaptionButton aria-label="Close"><Glyph size={11}><path d="M.5.5l10 10m0-10l-10 10" /></Glyph></CaptionButton>
        </TitleBar>
        <MenuBar>
          {menu.map((m) => <MenuItem key={m} $plain={noMnemonic.includes(m)}>{m}</MenuItem>)}
        </MenuBar>

        {toolbars.map((row, r) => (
          <ToolbarRow key={r}>
            {row.map((group, g) => (
              <ToolGroup key={g}>
                {group.map((key, i) => <Tool key={i} {...parseTool(key)} />)}
              </ToolGroup>
            ))}
          </ToolbarRow>
        ))}

        <Main>
          <Side>
            <HGrip />
            <TabRow>
              {sideTabs.map((t, i) => (
                <Tab key={t} $active={i === sideTab} $pad={i === sideTab ? 6 : 4} onClick={() => setSideTab(i)}>{t}</Tab>
              ))}
            </TabRow>
            <SideBody>
              <SideTools>
                <Tool name="open" />
                <Tool name="closeFolder" />
                <Tool name="toTracks" />
                <Tool name="toCd" />
                <Tool name="toWave" $off />
                <Tool name="gear" $down />
              </SideTools>
              <FileList>
                {files.map((f, i) => (
                  <FileRow key={f} $selected={i === selected} onClick={() => setSelected(i)}>
                    {miniWave}
                    <span>{f}</span>
                  </FileRow>
                ))}
              </FileList>
              <PreviewRow>
                <FlatButton $w={42}>Авто</FlatButton>
                <FlatButton $w={21} aria-label="Play"><Glyph size={9}><path d="M1 0l7 4.500L1 9z" fill="#fff" stroke="none" /></Glyph></FlatButton>
                <FlatButton $w={21} $on aria-label="Loop"><Glyph size={13} height={7}><path d="M6.500 3.500C3 0 1 1 1 3.500S4 7 6.500 3.500 12 1 12 3.500 9 7 6.500 3.500" stroke="#56607a" strokeWidth="2" /><path d="M6.500 3.500C3 0 1 1 1 3.500S4 7 6.500 3.500 12 1 12 3.500 9 7 6.500 3.500" stroke="#fff" /></Glyph></FlatButton>
                <Volume>
                  <input type="range" defaultValue="52" />
                  <Glyph size={76} height={23}>
                    <path d="M4 0v8L0 4zM70 0v8l4-4z" fill="#eee" stroke="none" />
                    <path d="M14.500 10v4M60.500 10v4" stroke="#ddd" />
                    <path d="M46 11.500h14" stroke="#ddd" strokeDasharray="1 3" />
                    <g fill="#e6e9ee" stroke="none" fontSize="9">
                      <text x="8" y="20">-∞</text><text x="35" y="21">0</text><text x="58" y="21">6</text>
                    </g>
                  </Glyph>
                  <span>Просмотр громк.</span>
                </Volume>
              </PreviewRow>
              <Rule />
              <Options>
                <OptionTitle>Показать типы</OptionTitle>
                <OptionTitle as="label" htmlFor="sort">Сортировать по:</OptionTitle>
                <TypeList>
                  {types.map(([label, icon]) => (
                    <TypeRow key={label}>
                      <input type="checkbox" defaultChecked />
                      {icon}
                      {label}
                    </TypeRow>
                  ))}
                </TypeList>
                <SortColumn>
                  <SelectBox>
                    <select id="sort"><option>Последний доступ</option></select>
                    <Glyph size={18} height={19}><path d="M5 8h7l-3.500 4z" fill="#000" stroke="none" /></Glyph>
                  </SelectBox>
                  <FlatButton $on>Показать кью</FlatButton>
                  <FlatButton>Полные пути</FlatButton>
                </SortColumn>
              </Options>
            </SideBody>
          </Side>
          <Splitter />
          <Editor>
            <TabRow>
              {viewTabs.map((t, i) => (
                <Tab key={t} $active={i === viewTab} $pad={7} onClick={() => setViewTab(i)}>{t}</Tab>
              ))}
            </TabRow>
            <EditorBody>
              <Overview>
                <OverviewRange style={{ marginLeft: percent(1373747 - 32000, 2509000), width: percent(738000, 2509000) }} />
              </Overview>
              <Plot>
                <WaveBox><Waveform /></WaveBox>
                <RightRuler><LevelRuler /></RightRuler>
                <BottomRuler><SampleRuler /></BottomRuler>
              </Plot>
            </EditorBody>
          </Editor>
        </Main>

        <Divider />
        <Dock>
          <VGrip />
          <ButtonGrid $cols={5} $gap={3}>
            {['!stop', 'play', '!pause', 'playEnd', 'loop', 'start', 'rewind', 'forward', 'end', 'record'].map((k) => (
              <Tool key={k} $wide {...parseTool(k)} />
            ))}
          </ButtonGrid>
          <Splitter />
          <VGrip />
          <ButtonGrid $cols={3} $gap={7}>
            {['zoomIn', 'zoomOut', 'zoomFull', 'zoomSel', 'zoomLeft', 'zoomRight'].map((k) => <Tool key={k} name={k} $wide />)}
          </ButtonGrid>
          <ButtonGrid $cols={1} $gap={4}>
            <Tool name="vIn" $wide />
            <Tool name="vOut" $wide />
          </ButtonGrid>
          <Splitter />
          <VGrip />
          <TimeDisplay>0</TimeDisplay>
          <Splitter />
          <VGrip />
          <RangeTable>
            <thead>
              <tr><th /><th>Начало</th><th>Конец</th><th>Длина</th></tr>
            </thead>
            <tbody>
              {[['Выбор', '0', '', '0'], ['Вид', '1373747', '2123864', '750117']].map(([label, ...cells]) => (
                <tr key={label}>
                  <th>{label}</th>
                  {cells.map((v, i) => <td key={i}><input aria-label={`${label} ${i + 1}`} defaultValue={v} /></td>)}
                </tr>
              ))}
            </tbody>
          </RangeTable>
        </Dock>
        <Divider />

        <LevelDock>
          <VGrip />
          <LevelColumn>
            <LevelMeter><i /><i /></LevelMeter>
            <DbScale />
          </LevelColumn>
        </LevelDock>

        <StatusBar>
          <StatusCell>Открыто за 5.09 секунд</StatusCell>
          <StatusCell $w={135}>0dB @ 1919854</StatusCell>
          <StatusCell $w={132}>8000 • 8-бит • Моно</StatusCell>
          <StatusCell $w={66}>2.44 MB</StatusCell>
          <StatusCell $w={133}>
            100.44 GB свободно
            <Glyph size={14} height={16}><path d="M2 15L14 3M6 15l8-8M10 15l4-4" stroke="#999" strokeWidth="1.500" /></Glyph>
          </StatusCell>
        </StatusBar>
      </Window>
    </>
  );
}
